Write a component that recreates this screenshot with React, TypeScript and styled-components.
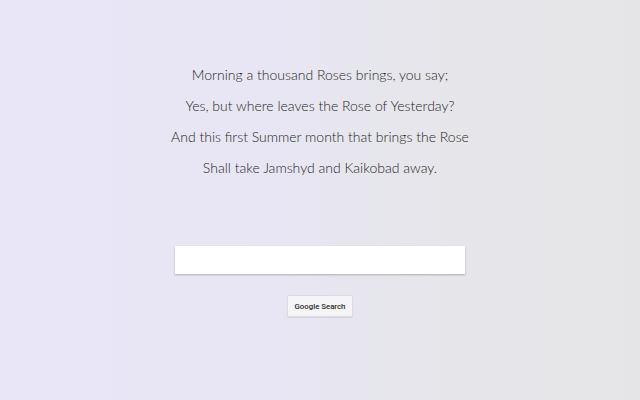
import styled, { createGlobalStyle } from 'styled-components'

const GlobalStyle = createGlobalStyle`
  html, body {
    margin: 0;
    padding: 0;
  }
  body {
    font-family: Lato, "Open Sans", sans-serif;
  }
`

const Page = styled.div`
  min-height: 400px;
  box-sizing: border-box;
  padding-top: 59px;
  display: flex;
  flex-direction: column;
  align-items: center;
  background: linear-gradient(90deg, #e9e7f7 0%, #e8e6f5 40%, #e6e6ec 62%, #e5e5e7 100%);
`

const Poem = styled.div`
  text-align: center;
  color: #1f1f24;
  font-family: "Lato Light", Lato, sans-serif;
  font-weight: 300;
  font-size: 14px;
  line-height: 31px;
`

const Line = styled.p`
  margin: 0;
`

const SearchForm = styled.form`
  margin-top: 63px;
  display: flex;
  flex-direction: column;
  align-items: center;
  gap: 21px;
`

const SearchInput = styled.input`
  width: 290px;
  height: 28px;
  box-sizing: border-box;
  border: none;
  outline: none;
  background: #fff;
  box-shadow: 0 1px 2px rgba(0, 0, 0, 0.25);
  padding: 0 8px;
  font-family: Roboto, sans-serif;
  font-size: 13px;
`

const SearchButton = styled.button`
  width: 66px;
  height: 22px;
  box-sizing: border-box;
  padding: 0;
  background: #f5f5f7;
  border: 1px solid #dcdce0;
  border-radius: 2px;
  box-shadow: 0 1px 1px rgba(0, 0, 0, 0.08);
  color: #2a2a2a;
  font-family: Roboto, Arial, sans-serif;
  font-weight: 500;
  font-size: 7.8px;
  cursor: pointer;
`

const lines = [
  'Morning a thousand Roses brings, you say;',
  'Yes, but where leaves the Rose of Yesterday?',
  'And this first Summer month that brings the Rose',
  'Shall take Jamshyd and Kaikobad away.',
]

export default function App() {
  return (
    <>
      <GlobalStyle />
      <Page>
        <Poem>
          {lines.map((l) => (
            <Line key={l}>{l}</Line>
          ))}
        </Poem>
        <SearchForm onSubmit={(e) => e.preventDefault()}>
          <SearchInput type="text" aria-label="Search" />
          <SearchButton type="submit">Google Search</SearchButton>
        </SearchForm>
      </Page>
    </>
  )
}
